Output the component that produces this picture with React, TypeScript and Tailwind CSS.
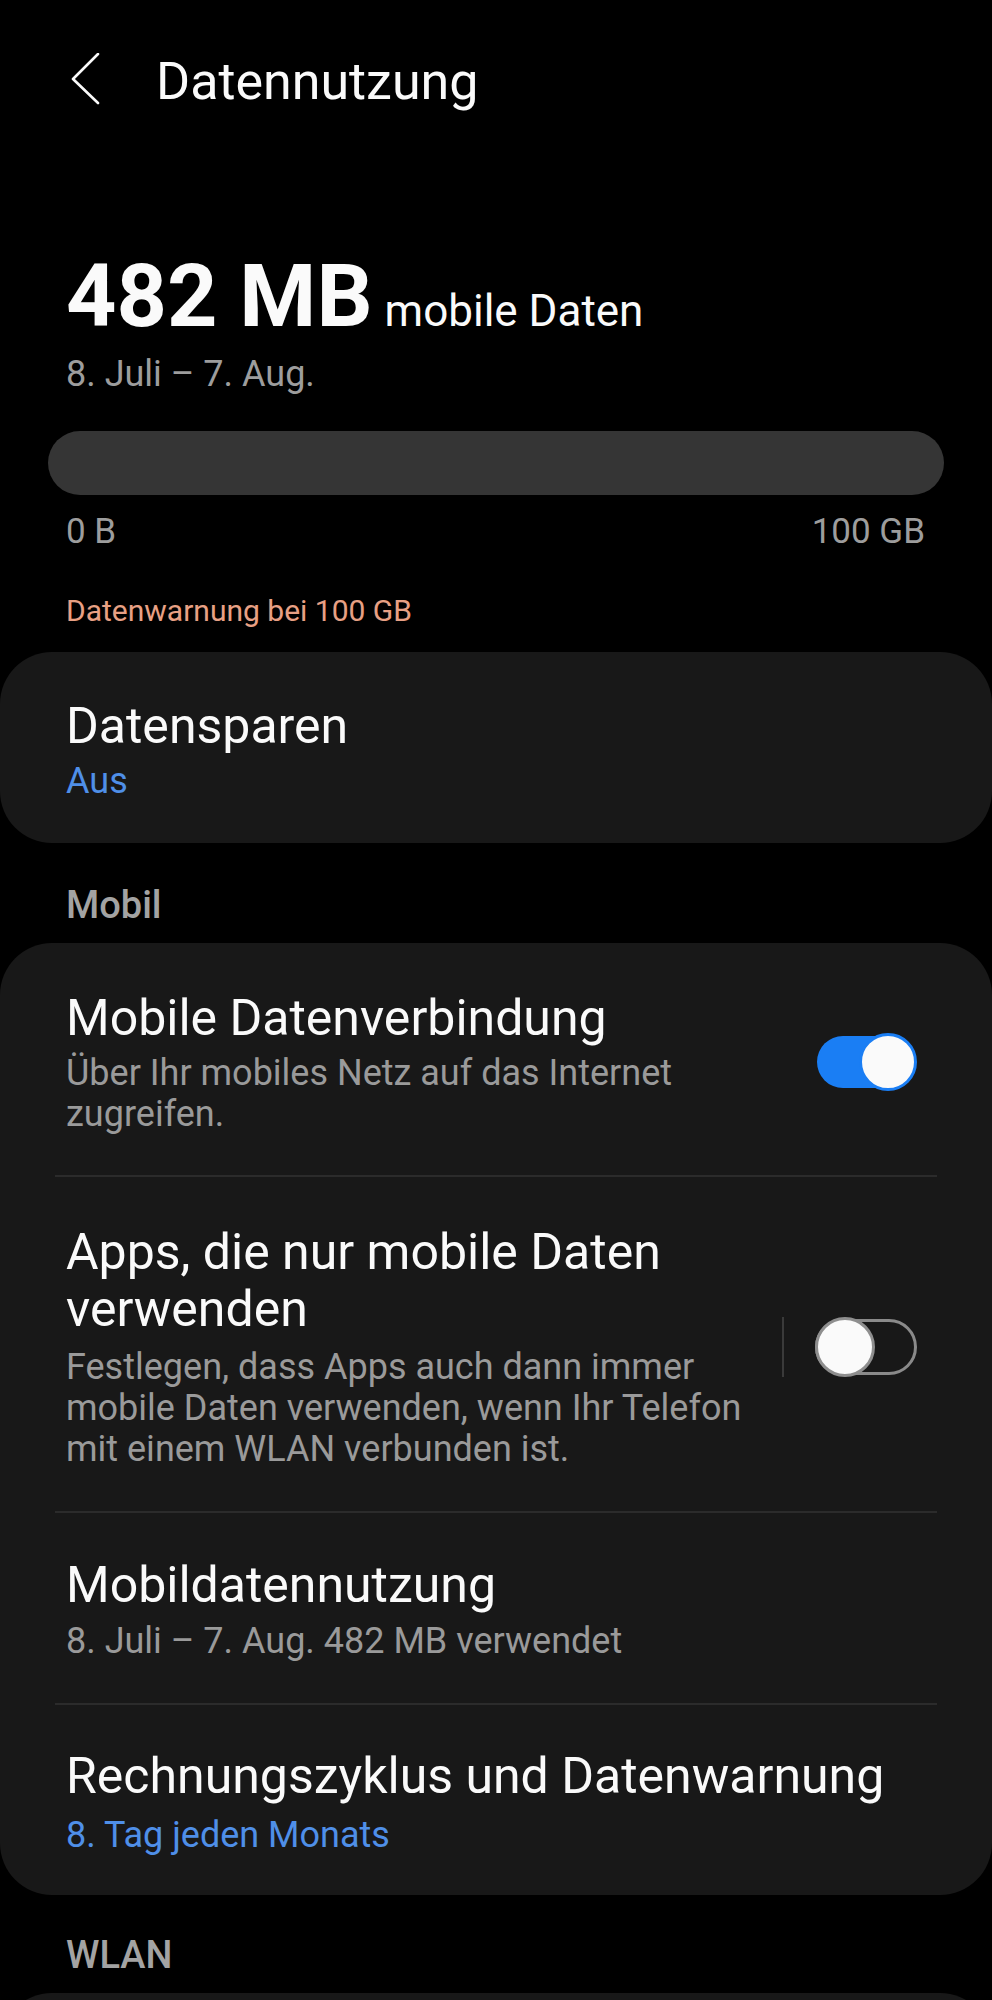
import type { ReactNode } from "react";

function ToggleOn() {
  return (
    <div className="relative h-[58px] w-[100px] shrink-0">
      <div className="absolute top-[3px] left-0 h-[52px] w-[90px] rounded-full bg-[#1a7ef4]" />
      <div className="absolute top-0 right-0 h-[58px] w-[58px] rounded-full border-[3px] border-[#1a7ef4] bg-[#fafafa]" />
    </div>
  );
}

function ToggleOff() {
  return (
    <div className="relative h-[60px] w-[102px] shrink-0">
      <div className="absolute top-[2px] left-0 h-[56px] w-[102px] rounded-full border-[3px] border-[#8a8a8a]" />
      <div className="absolute top-0 left-0 h-[60px] w-[60px] rounded-full border-[3px] border-[#8e8e8e] bg-[#fafafa]" />
    </div>
  );
}

function Divider() {
  return <div className="mx-[55px] h-[2px] bg-[#2b2b2b]" />;
}

function SectionLabel({ children }: { children: ReactNode }) {
  return (
    <div className="px-[66px] text-[38px] leading-[44px] font-medium text-[#a3a3a3]">
      {children}
    </div>
  );
}

export default function App() {
  return (
    <div className="h-[2000px] overflow-hidden bg-black text-[#fafafa] [font-family:Roboto,'Liberation_Sans',sans-serif]">
      {/* header */}
      <div className="flex items-start pt-[52px] pl-[70px]">
        <svg className="mt-[1px]" width="30" height="52" viewBox="0 0 30 52" fill="none">
          <polyline
            points="28,1 3,26 28,50"
            stroke="#fafafa"
            strokeWidth="2.6"
            strokeLinecap="round"
            strokeLinejoin="round"
          />
        </svg>
        <h1 className="ml-[56px] text-[52px] leading-[60px] font-normal">Datennutzung</h1>
      </div>

      {/* usage summary */}
      <div className="mt-[140px] flex items-baseline px-[66px]">
        <span className="text-[88px] leading-[88px] font-bold">482 MB</span>
        <span className="ml-[12px] text-[44px] leading-[52px]">mobile Daten</span>
      </div>
      <div className="mt-[13px] px-[66px] text-[36px] leading-[42px] text-[#9d9d9d]">
        8. Juli – 7. Aug.
      </div>

      <div className="mx-[48px] mt-[36px] h-[64px] rounded-full bg-[#353535]" />
      <div className="mt-[16px] flex justify-between pr-[67px] pl-[66px] text-[35px] leading-[42px] text-[#9d9d9d]">
        <span>0 B</span>
        <span>100 GB</span>
      </div>
      <div className="mt-[40px] px-[66px] text-[30px] leading-[36px] text-[#e8a084]">
        Datenwarnung bei 100 GB
      </div>

      {/* data saver */}
      <div className="mt-[23px] rounded-[52px] bg-[#181818] px-[66px] pt-[45px] pb-[40px]">
        <div className="text-[50px] leading-[58px]">Datensparen</div>
        <div className="mt-[4px] text-[36px] leading-[44px] text-[#4f8fe8]">Aus</div>
      </div>

      <div className="mt-[40px]">
        <SectionLabel>Mobil</SectionLabel>
      </div>

      {/* mobile card */}
      <div className="mt-[16px] rounded-[52px] bg-[#181818]">
        <div className="flex items-center pt-[46px] pr-[75px] pb-[40px] pl-[66px]">
          <div className="min-w-0 flex-1">
            <div className="text-[50px] leading-[58px]">Mobile Datenverbindung</div>
            <div className="mt-[6px] text-[36px] leading-[41px] text-[#9a9a9a]">
              Über Ihr mobiles Netz auf das Internet zugreifen.
            </div>
          </div>
          <div className="ml-[47px]">
            <ToggleOn />
          </div>
        </div>
        <Divider />

        <div className="flex items-center pt-[47px] pr-[75px] pb-[41px] pl-[66px]">
          <div className="min-w-0 flex-1">
            <div className="text-[50px] leading-[57px]">Apps, die nur mobile Daten verwenden</div>
            <div className="mt-[9px] text-[36px] leading-[41px] text-[#9a9a9a]">
              Festlegen, dass Apps auch dann immer mobile Daten verwenden, wenn Ihr Telefon mit
              einem WLAN verbunden ist.
            </div>
          </div>
          <div className="ml-[12px] h-[60px] w-[2px] bg-[#3a3a3a]" />
          <div className="ml-[31px]">
            <ToggleOff />
          </div>
        </div>
        <Divider />

        <div className="px-[66px] pt-[43px] pb-[40px]">
          <div className="text-[50px] leading-[58px]">Mobildatennutzung</div>
          <div className="mt-[5px] text-[36px] leading-[44px] text-[#9a9a9a]">
            8. Juli – 7. Aug. 482 MB verwendet
          </div>
        </div>
        <Divider />

        <div className="px-[66px] pt-[42px] pb-[38px]">
          <div className="text-[50px] leading-[58px]">Rechnungszyklus und Datenwarnung</div>
          <div className="mt-[8px] text-[36px] leading-[44px] text-[#4f8fe8]">
            8. Tag jeden Monats
          </div>
        </div>
      </div>

      <div className="mt-[38px]">
        <SectionLabel>WLAN</SectionLabel>
      </div>
      <div className="mt-[16px] h-[120px] rounded-t-[52px] bg-[#181818]" />
    </div>
  );
}
